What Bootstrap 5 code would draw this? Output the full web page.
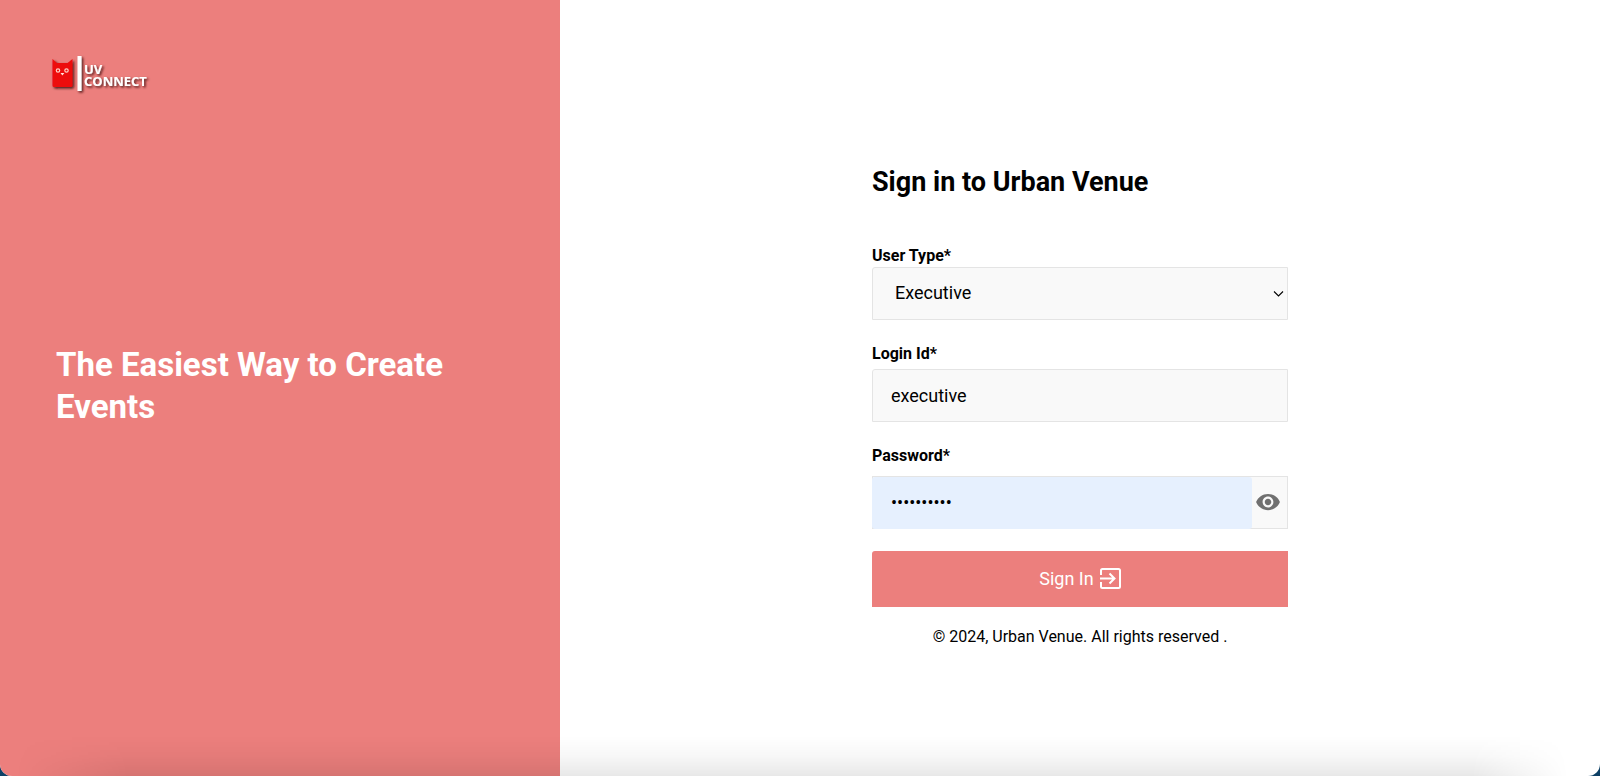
<!DOCTYPE html>
<html lang="en">
<head>
<meta charset="utf-8">
<meta name="viewport" content="width=device-width, initial-scale=1">
<title>Sign in to Urban Venue</title>
<link href="https://cdn.jsdelivr.net/npm/bootstrap@5.3.0/dist/css/bootstrap.min.css" rel="stylesheet">
<style>
  :root { --uv-coral: #ec7f7d; --uv-field: #f9f9f9; --uv-line: #e4e4e4; }
  body { font-family: Roboto, "Liberation Sans", sans-serif; color: #000; background: #0d4065; }
  .uv-page { background: #fff; border-radius: 0 0 12px 12px; }
  .uv-page::after {
    content: ""; position: absolute; left: 0; right: 0; bottom: 0; height: 40px; pointer-events: none;
    background: linear-gradient(to top, rgba(0,0,0,.09), rgba(0,0,0,.03) 50%, transparent);
    -webkit-mask-image: linear-gradient(to right, transparent 1%, #000 8%, #000 92%, transparent 98%);
    mask-image: linear-gradient(to right, transparent 1%, #000 8%, #000 92%, transparent 98%);
  }
  .uv-aside { flex: 0 0 35%; display: grid; grid-template-rows: 1fr auto 1fr; padding: 0 56px 4px; background: var(--uv-coral); }
  .uv-logo { margin: 50px 0 0 -8px; }
  .uv-slogan { font-size: 33px; line-height: 42px; font-weight: 700; }
  .uv-main { padding-top: 36px; }
  .uv-form { width: 40%; min-width: 280px; }
  .uv-title { font-size: 27px; line-height: 32px; font-weight: 700; margin-bottom: 48px; }
  .uv-label { display: block; font-size: 16px; line-height: 20px; font-weight: 700; margin-bottom: 5px; }
  .uv-label-tight { margin-bottom: 1px; }
  .uv-label-loose { margin-bottom: 10px; }
  .uv-field { height: 53px; font-size: 18px; line-height: 24px; color: #000; background-color: var(--uv-field); border: 1px solid var(--uv-line); border-radius: 3px 0 0 0; padding: 0 18px; }
  select.uv-field { padding-left: 22px; background-position: right 3px center; background-size: 11px 11px;
    background-image: url("data:image/svg+xml,%3Csvg xmlns='http://www.w3.org/2000/svg' viewBox='0 0 11 11'%3E%3Cpath d='M1 3.5 5.5 8 10 3.5' fill='none' stroke='%23000' stroke-width='1.1'/%3E%3C/svg%3E"); }
  .uv-password { height: 53px; background: var(--uv-field); border: 1px solid var(--uv-line); }
  .uv-password input { min-width: 0; border: 0; border-radius: 3px; background: #e6f0fe; padding: 0 19px; margin: 0 0 -1px -1px; font-size: 18px; color: #000; }
  .uv-eye { width: 35px; border: 0; background: transparent; padding: 0 4px 0 0; color: #707070; }
  .uv-submit { height: 56px; gap: 6px; margin: 22px 0 20px; font-size: 18px; line-height: 24px; color: #fff; background: var(--uv-coral); border: 0; border-radius: 3px 0 0 0; }
  .uv-legal { font-size: 16px; line-height: 20px; }
</style>
</head>
<body>
<div class="uv-page position-relative d-flex min-vh-100 overflow-hidden">
  <aside class="uv-aside text-white">
    <a class="uv-logo" href="#" aria-label="UV Connect">
      <svg width="110" height="50" viewBox="0 0 110 50">
        <defs>
          <filter id="shade" x="-20%" y="-20%" width="150%" height="150%"><feDropShadow dx="1.5" dy="1.5" stdDeviation="0.9" flood-color="#3c1010" flood-opacity=".9"/></filter>
        </defs>
        <g filter="url(#shade)">
          <path d="M4.500 9 9 13H19.500L24.500 9V35.500Q24.500 37 23 37H6Q4.500 37 4.500 35.500Z" fill="#ed0c10"/>
          <path d="M29.500 6h4v35h-4z" fill="#fff"/>
          <g fill="#fff" font-family="'Open Sans', sans-serif" font-weight="700" font-size="13">
            <text x="36" y="24">UV</text>
            <text x="36" y="36">CONNECT</text>
          </g>
        </g>
        <g fill="none" stroke="#ffd0c4" stroke-width="1.200"><circle cx="10" cy="20.500" r="1.700"/><circle cx="18.500" cy="20.500" r="1.700"/></g>
        <path d="M12.500 23h3.800l-1.900 2.600z" fill="#ffe7df"/>
      </svg>
    </a>
    <h1 class="uv-slogan m-0">The Easiest Way to Create Events</h1>
  </aside>
  <main class="uv-main flex-grow-1 d-flex align-items-center justify-content-center">
    <form class="uv-form">
      <h2 class="uv-title">Sign in to Urban Venue</h2>
      <label class="uv-label uv-label-tight" for="userType">User Type*</label>
      <select class="uv-field form-select mb-4" id="userType"><option>Executive</option></select>
      <label class="uv-label" for="loginId">Login Id*</label>
      <input class="uv-field form-control mb-4" id="loginId" type="text" value="executive">
      <label class="uv-label uv-label-loose" for="password">Password*</label>
      <div class="uv-password d-flex">
        <input class="flex-grow-1" id="password" type="password" value="executive1">
        <button class="uv-eye d-flex align-items-center justify-content-center" type="button" aria-label="Show password">
          <svg width="26" height="26" viewBox="0 0 24 24" fill="currentColor"><path d="M12 4.500C7 4.500 2.730 7.610 1 12c1.730 4.390 6 7.500 11 7.500s9.270-3.110 11-7.500c-1.730-4.390-6-7.500-11-7.500zM12 17c-2.760 0-5-2.240-5-5s2.240-5 5-5 5 2.240 5 5-2.240 5-5 5zm0-8c-1.660 0-3 1.340-3 3s1.340 3 3 3 3-1.340 3-3-1.340-3-3-3z"/></svg>
        </button>
      </div>
      <button class="uv-submit w-100 d-flex align-items-center justify-content-center" type="submit">Sign In
        <svg width="21" height="21" viewBox="0 0 21 21" fill="none" stroke="#fff" stroke-width="2"><path d="M1 7V2.500Q1 1 2.500 1H18.500Q20 1 20 2.500V18.500Q20 20 18.500 20H2.500Q1 20 1 18.500V14M0 10.500H14M9.500 5.500l5 5-5 5"/></svg>
      </button>
      <p class="uv-legal text-center mb-0">© 2024, Urban Venue. All rights reserved .</p>
    </form>
  </main>
</div>
<script src="https://cdn.jsdelivr.net/npm/bootstrap@5.3.0/dist/js/bootstrap.bundle.min.js"></script>
</body>
</html>
